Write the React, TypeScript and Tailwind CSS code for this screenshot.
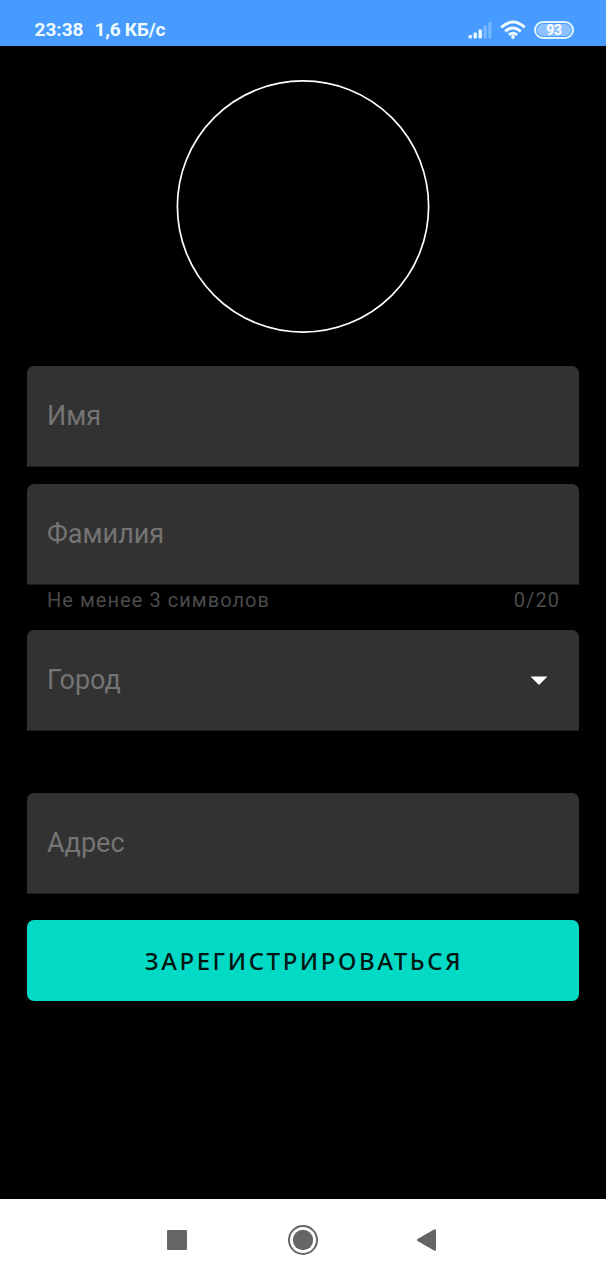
import type { ReactNode } from "react";

function StatusBar() {
  return (
    <header className="flex h-[46px] shrink-0 items-start justify-between bg-[#479bff] pl-[34.5px] pr-[32px] pt-[19px] text-white">
      <div className="flex gap-[11px] whitespace-pre text-[19px] font-bold leading-[22px] text-[#effbff]">
        <span>23:38</span>
        <span className="tracking-[-0.2px]">1,6 КБ/с</span>
      </div>
      <div className="flex h-[21px] items-center">
        <svg width="24" height="18" viewBox="0 0 24 18" fill="#e6f6ff">
          <rect x="0.5" y="14" width="3.4" height="3.5" rx="1" />
          <rect x="5.5" y="11.5" width="3.4" height="6" rx="1" />
          <rect x="10.5" y="8.5" width="3.4" height="9" rx="1" />
          <rect x="15.5" y="4.5" width="3.2" height="13" rx="1" opacity=".3" />
          <rect x="20.3" y="1" width="3.2" height="16.5" rx="1" opacity=".3" />
        </svg>
        <svg className="ml-2" width="26" height="20" viewBox="0 0 26 20" fill="none" stroke="#effaff" strokeWidth="2.9">
          <path d="M1.2 7.4Q13-3.4 24.8 7.4" />
          <path d="M5.2 11.4Q13 4.4 20.8 11.4" />
          <path d="M8.9 15Q13 11.6 17.1 15" />
          <circle cx="13" cy="17" r="1.9" fill="#effaff" stroke="none" />
        </svg>
        <div className="ml-2 flex h-[18px] w-[40px] items-center justify-center rounded-full border-2 border-[#e1f5ff] p-[1px]">
          <div className="flex h-full w-full items-center justify-center rounded-full bg-[#8dc2ff] text-[14px] font-bold leading-none tracking-[-0.3px]">93</div>
        </div>
      </div>
    </header>
  );
}

function Field({ label, children }: { label: string; children?: ReactNode }) {
  return (
    <div className="flex h-[101px] shrink-0 items-center justify-between rounded-t-[7px] border-b border-[#1c1c1c] bg-[#323232] pl-5 pr-[31px] text-[27px] leading-8 text-[#747474]">
      <span>{label}</span>
      {children}
    </div>
  );
}

export default function App() {
  return (
    <div className="flex h-[1280px] w-[606px] flex-col overflow-hidden bg-black font-['Roboto',sans-serif]">
      <StatusBar />
      <main className="flex flex-1 flex-col px-[27px] pt-[34px]">
        <svg className="mx-auto shrink-0" width="254" height="253" viewBox="0 0 254 253" fill="none">
          <circle cx="127" cy="126.5" r="125.6" stroke="white" strokeWidth="1.7" />
        </svg>
        <form className="mt-[33px] flex flex-col">
          <Field label="Имя" />
          <div className="mt-[17px] flex flex-col">
            <Field label="Фамилия" />
            <div className="flex h-[45px] justify-between pl-5 pr-[19px] pt-[3px] text-[20px] leading-6 tracking-[1.05px] text-[#4b4b4b]">
              <span>Не менее 3 символов</span>
              <span>0/20</span>
            </div>
          </div>
          <Field label="Город">
            <svg width="18" height="9" viewBox="0 0 18 9" fill="white">
              <path d="M0.5 0.5H17.5L9 9Z" />
            </svg>
          </Field>
          <div className="mt-[62px] flex flex-col">
            <Field label="Адрес" />
          </div>
          <button type="button" className="mt-[26px] flex h-[81px] items-center justify-center rounded-[7px] bg-[#03dac6] pl-0.5 pt-[1px] font-['Noto_Sans',sans-serif] text-[24px] font-medium leading-8 tracking-[2.55px] text-[#001713]">
            ЗАРЕГИСТРИРОВАТЬСЯ
          </button>
        </form>
      </main>
      <nav className="flex h-[81px] shrink-0 items-center justify-center bg-white">
        <svg width="272" height="32" viewBox="0 0 272 32" fill="#666">
          <rect x="0" y="6" width="20" height="20" rx="1" />
          <circle cx="136" cy="16" r="14" fill="none" stroke="#666" strokeWidth="2" />
          <circle cx="136" cy="16" r="10.2" />
          <path d="M250.5 15L267 5.5Q269 4.7 269 6.5V25.5Q269 27.3 267 26.5L250.5 17Q249.3 16 250.5 15Z" />
        </svg>
      </nav>
    </div>
  );
}
